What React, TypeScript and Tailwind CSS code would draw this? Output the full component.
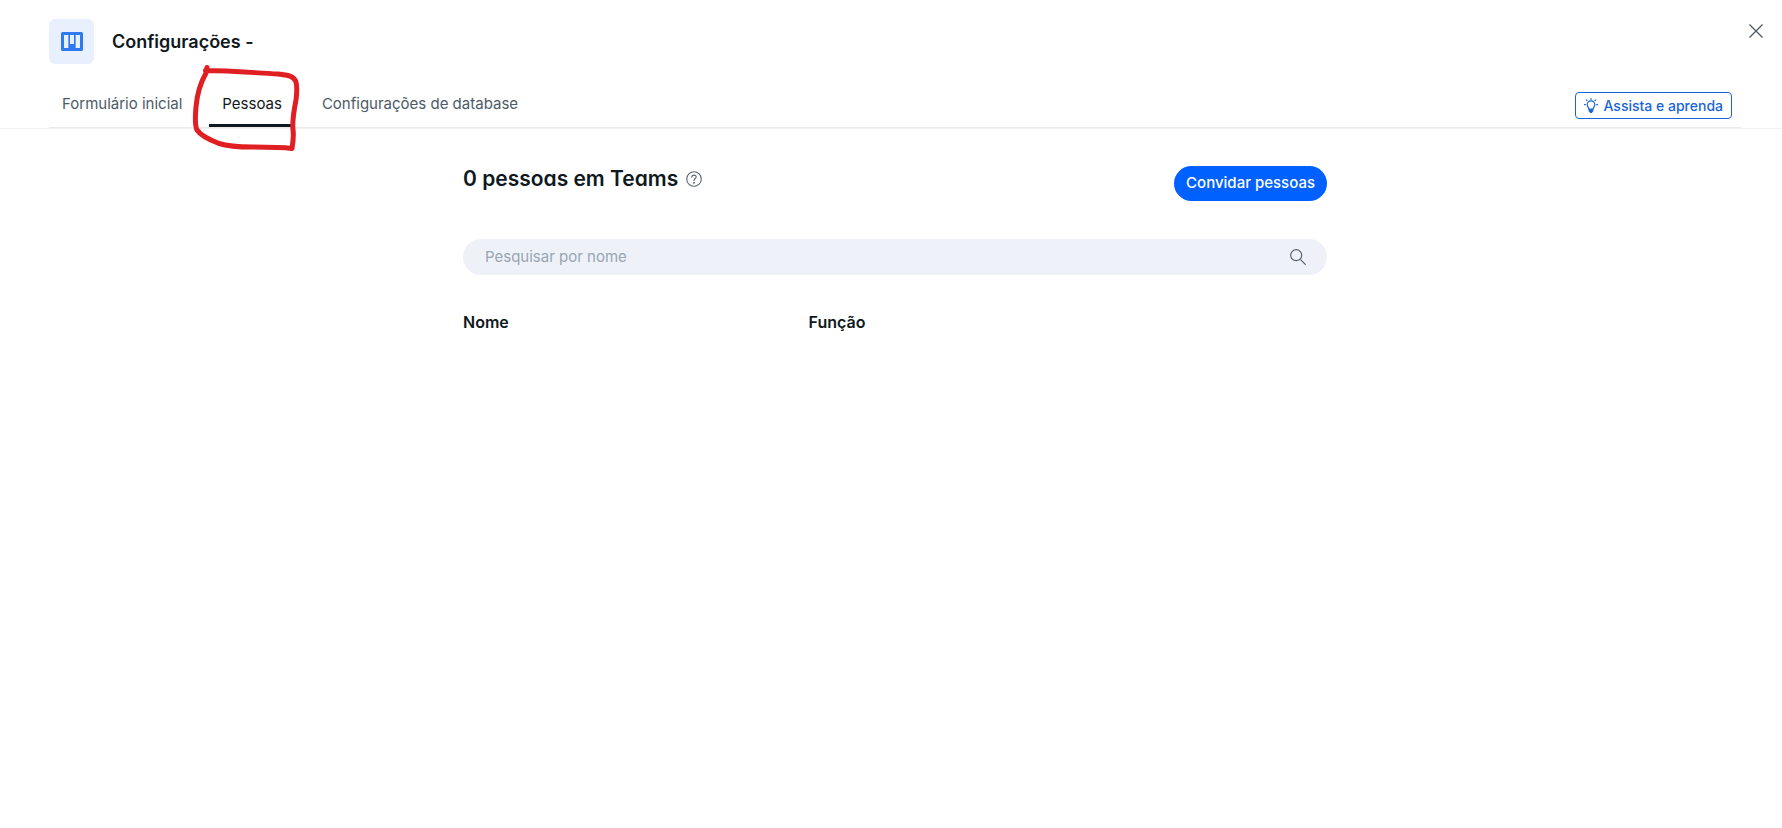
import React, { useState } from "react";

const tabs = ["Formulário inicial", "Pessoas", "Configurações de database"];

function BoardIcon() {
  return (
    <svg width="22" height="19" viewBox="0 0 22 19" aria-hidden="true">
      <rect width="22" height="19" rx="1.5" fill="#2f7af0" />
      <path d="M3 3h4v13H3zM9 3h4v9H9zM15 3h4v13h-4z" fill="#e8f0fe" />
      <path d="M7.500 3v13M14.500 3v13" stroke="#6fa2f5" strokeWidth="1" />
    </svg>
  );
}

function BulbIcon() {
  return (
    <svg width="14" height="16" viewBox="0 0 14 16" fill="none" stroke="#1764d8" strokeWidth="1.2" strokeLinecap="round" aria-hidden="true">
      <path d="M5 11.2C5 9.7 3.2 8.8 3.2 6.6a3.8 3.8 0 0 1 7.6 0c0 2.2-1.8 3.1-1.8 4.6z" />
      <path d="M4.600 11.200h4.800v1.800L7.800 15H6.200L4.600 13z" fill="#1764d8" stroke="none" />
      <path d="M7 .6v.8M2.300 1.900l.7.700M11.700 1.900l-.7.700M.5 6.600h.9M12.600 6.600h.9" />
    </svg>
  );
}

function HandDrawnMark() {
  return (
    <svg
      className="pointer-events-none absolute -top-[17px] -left-[19px] z-10"
      width="116"
      height="90"
      viewBox="190 63 116 90"
      fill="none"
      stroke="#df1f22"
      strokeWidth="5"
      strokeLinecap="round"
      strokeLinejoin="round"
      aria-hidden="true"
    >
      <path d="M207 67.5L206 73C201 82 197 94 196 107C195 118 195 126 197 130C201 136 210 140 219 143.500C230 147 240 147 252 147C266 147 280 147 292 148.500C293 142 294 136 293 130C292 120 294 110 296 100C297 92 297 86 296 82C294 76 288 75 278 74C256 73 232 70.500 205.500 70.500" />
    </svg>
  );
}

export default function App() {
  const [active, setActive] = useState("Pessoas");

  return (
    <div className="min-h-screen bg-white font-['Inter',sans-serif] text-[#101820]">
      <header className="border-b border-[#f1f1f1] pr-[41px] pl-[49px]">
        <div className="flex items-start justify-between pt-[19px]">
          <div className="flex items-center gap-[18px]">
            <div className="flex size-[45px] items-center justify-center rounded-md bg-[#e8f0fe]">
              <BoardIcon />
            </div>
            <h1 className="text-lg font-semibold">Configurações -</h1>
          </div>
          <button type="button" aria-label="Fechar" className="-mr-[22px] mt-[5px]">
            <svg width="14" height="14" viewBox="0 0 14 14" fill="none" stroke="#4b555e" strokeWidth="1.2" aria-hidden="true">
              <path d="M.5.5l13 13M13.500.5L.5 13.500" />
            </svg>
          </button>
        </div>
        <div className="mt-4 flex items-center justify-between border-b border-[#e9eaeb] pr-[9px]">
          <nav className="flex gap-[14px]">
            {tabs.map((tab) => (
              <div key={tab} className="relative">
                <button
                  type="button"
                  onClick={() => setActive(tab)}
                  className={
                    tab === active
                      ? "h-[47px] border-b-[3px] border-[#101820] px-[13px] pt-1 text-[15px] whitespace-nowrap text-[#101820]"
                      : "h-[47px] border-b-[3px] border-transparent px-[13px] pt-1 text-[15px] whitespace-nowrap text-[#4c5b66]"
                  }
                >
                  {tab}
                </button>
                {tab === "Pessoas" && <HandDrawnMark />}
              </div>
            ))}
          </nav>
          <button type="button" className="mt-1 flex h-[27px] items-center gap-[6px] rounded border border-[#1764d8] px-2 text-sm font-medium whitespace-nowrap text-[#1764d8]">
            <BulbIcon />
            Assista e aprenda
          </button>
        </div>
      </header>

      <main className="mx-auto box-content max-w-[864px] pt-[37px] pl-2">
        <div className="flex items-start justify-between">
          <h2 className="flex items-center gap-2 text-[21px] leading-[26px] font-semibold [font-feature-settings:'cv11']">
            0 pessoas em Teams
            <svg width="16" height="16" viewBox="0 0 16 16" fill="none" stroke="#5b646d" strokeWidth="1.1" strokeLinecap="round" aria-hidden="true">
              <circle cx="8" cy="8" r="7.3" />
              <path d="M5.800 6.300c0-1.400 1-2.200 2.200-2.200s2.200.8 2.200 2c0 1.600-2.200 1.700-2.200 3.300" />
              <circle cx="8" cy="11.700" r=".4" fill="#5b646d" />
            </svg>
          </h2>
          <button type="button" className="h-[35px] rounded-full bg-[#0061ff] px-3 text-[15px] font-medium whitespace-nowrap text-white">
            Convidar pessoas
          </button>
        </div>

        <label className="mt-[38px] flex h-9 items-center rounded-full bg-[#eef1f7] pr-[21px] pl-[22px]">
          <input
            type="text"
            aria-label="Pesquisar por nome"
            placeholder="Pesquisar por nome"
            className="min-w-0 flex-1 bg-transparent text-[15px] outline-none placeholder:text-[#98a5b3]"
          />
          <svg width="16" height="16" viewBox="0 0 16 16" fill="none" stroke="#56606a" strokeWidth="1.2" strokeLinecap="round" aria-hidden="true">
            <circle cx="6.200" cy="6.200" r="5.500" />
            <path d="M10.800 10.800l4.500 4.500" />
          </svg>
        </label>

        <table className="mt-[35px] w-full table-fixed text-left text-base">
          <thead>
            <tr>
              <th className="w-2/5 font-semibold">Nome</th>
              <th className="font-semibold">Função</th>
            </tr>
          </thead>
        </table>
      </main>
    </div>
  );
}
